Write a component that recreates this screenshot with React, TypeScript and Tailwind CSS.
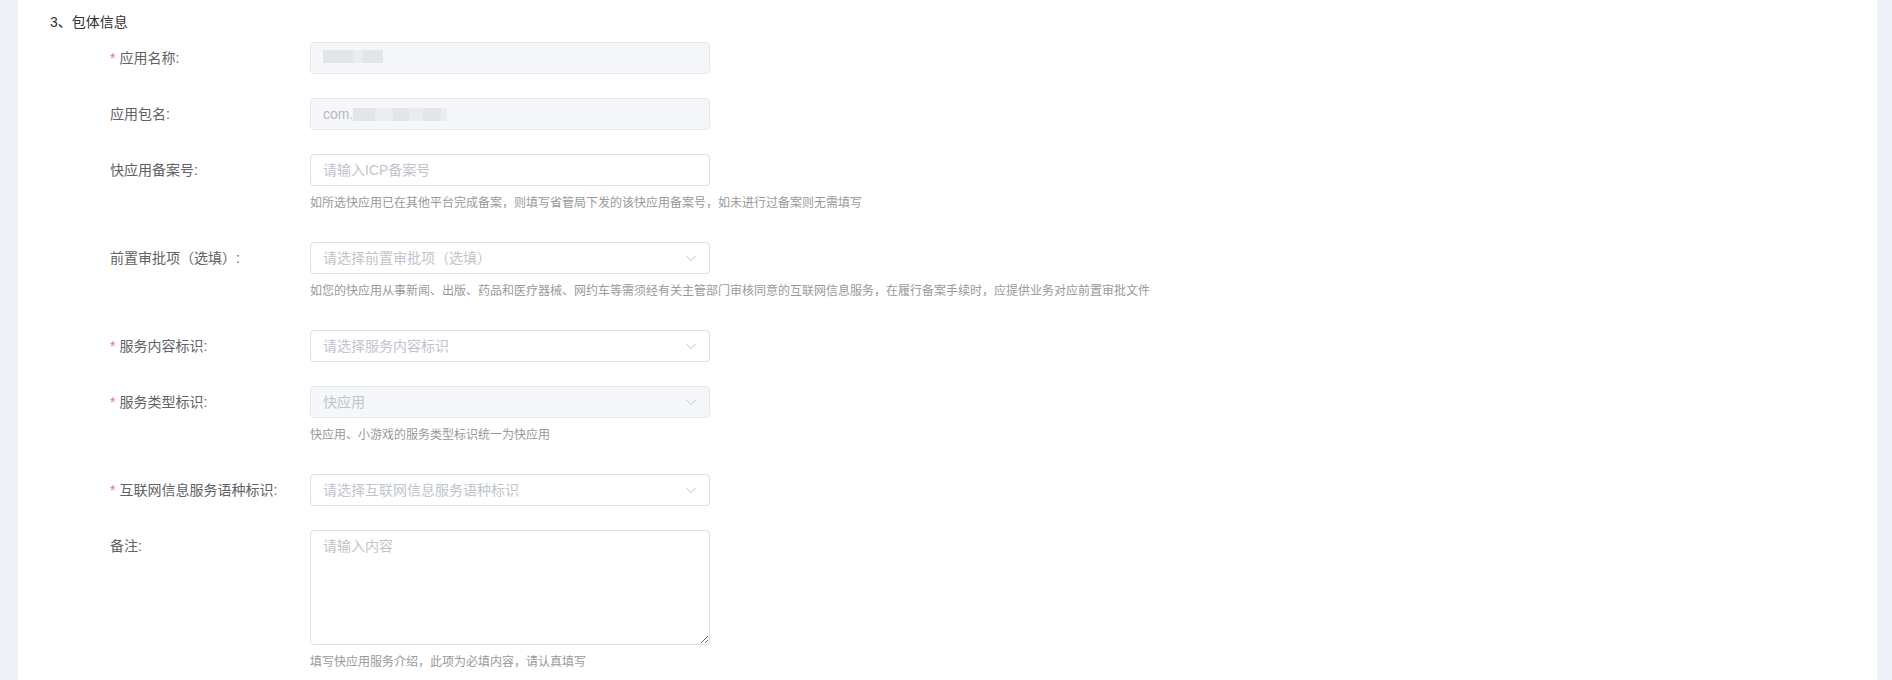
import React from 'react';

type Row = {
  label: string;
  required?: boolean;
  kind: 'input' | 'select' | 'textarea';
  placeholder?: string;
  value?: React.ReactNode;
  disabled?: boolean;
  help?: string;
};

const Chevron: React.FC = () => (
  <svg width="12" height="12" viewBox="0 0 12 12" className="text-[#c0c4cc]">
    <path d="M1.5 4 L6 8.5 L10.5 4" fill="none" stroke="currentColor" strokeWidth="1" />
  </svg>
);

const Blur: React.FC<{ widths: number[] }> = ({ widths }) => (
  <span className="inline-flex items-center h-[13px]">
    {widths.map((w, i) => (
      <span
        key={i}
        className={`h-[13px] ${i % 2 === 0 ? 'bg-[#e4e5e8]' : 'bg-[#ebecee]'}`}
        style={{ width: w }}
      />
    ))}
  </span>
);

const rows: Row[] = [
  {
    label: '应用名称:',
    required: true,
    kind: 'input',
    disabled: true,
    value: <Blur widths={[30, 10, 20]} />,
  },
  {
    label: '应用包名:',
    kind: 'input',
    disabled: true,
    value: (
      <span className="flex items-center">
        com.<Blur widths={[22, 18, 16, 14, 18, 6]} />
      </span>
    ),
  },
  {
    label: '快应用备案号:',
    kind: 'input',
    placeholder: '请输入ICP备案号',
    help: '如所选快应用已在其他平台完成备案，则填写省管局下发的该快应用备案号，如未进行过备案则无需填写',
  },
  {
    label: '前置审批项（选填）:',
    kind: 'select',
    placeholder: '请选择前置审批项（选填）',
    help: '如您的快应用从事新闻、出版、药品和医疗器械、网约车等需须经有关主管部门审核同意的互联网信息服务，在履行备案手续时，应提供业务对应前置审批文件',
  },
  {
    label: '服务内容标识:',
    required: true,
    kind: 'select',
    placeholder: '请选择服务内容标识',
  },
  {
    label: '服务类型标识:',
    required: true,
    kind: 'select',
    disabled: true,
    placeholder: '快应用',
    help: '快应用、小游戏的服务类型标识统一为快应用',
  },
  {
    label: '互联网信息服务语种标识:',
    required: true,
    kind: 'select',
    placeholder: '请选择互联网信息服务语种标识',
  },
  {
    label: '备注:',
    kind: 'textarea',
    placeholder: '请输入内容',
    help: '填写快应用服务介绍，此项为必填内容，请认真填写',
  },
];

const Field: React.FC<{ row: Row }> = ({ row }) => {
  const box = row.disabled
    ? 'bg-[#f5f7fa] border-[#e4e7ed]'
    : 'bg-white border-[#dcdfe6]';

  if (row.kind === 'textarea') {
    return (
      <textarea
        placeholder={row.placeholder}
        className="block w-[400px] h-[115px] border border-[#dcdfe6] rounded px-3 py-[5px] text-sm leading-[21px] text-[#606266] placeholder:text-[#c0c4cc] outline-none resize-y"
      />
    );
  }

  return (
    <div className={`w-[400px] h-8 border rounded flex items-center justify-between pl-3 pr-[12px] text-sm ${box}`}>
      {row.value ? (
        <span className="text-[#b4b7bd]">{row.value}</span>
      ) : (
        <span className="text-[#c0c4cc]">{row.placeholder}</span>
      )}
      {row.kind === 'select' && <Chevron />}
    </div>
  );
};

export default function App() {
  return (
    <div
      className="min-h-[680px] bg-[#eef1f7] pl-[18px] pr-[15px] flex"
      style={{ fontFamily: '"Liberation Sans", "Noto Sans CJK SC", sans-serif' }}
    >
      <div className="flex-1 bg-white pt-3 pl-8 pb-4">
        <div className="text-sm leading-5 text-[#303133]">3、包体信息</div>

        <div className="pl-[60px] mt-[10px]">
          {rows.map((row) => (
            <div key={row.label} className={`flex ${row.help ? 'mb-0' : 'mb-6'}`}>
              <div className="w-[200px] h-8 flex items-center text-sm text-[#606266]">
                {row.required && <span className="text-[#f56c6c] mr-[4px]">*</span>}
                {row.label}
              </div>
              <div>
                <Field row={row} />
                {row.help && (
                  <div className="mt-[7px] mb-[29px] text-xs leading-5 text-[#999999]">{row.help}</div>
                )}
              </div>
            </div>
          ))}
        </div>
      </div>
    </div>
  );
}
